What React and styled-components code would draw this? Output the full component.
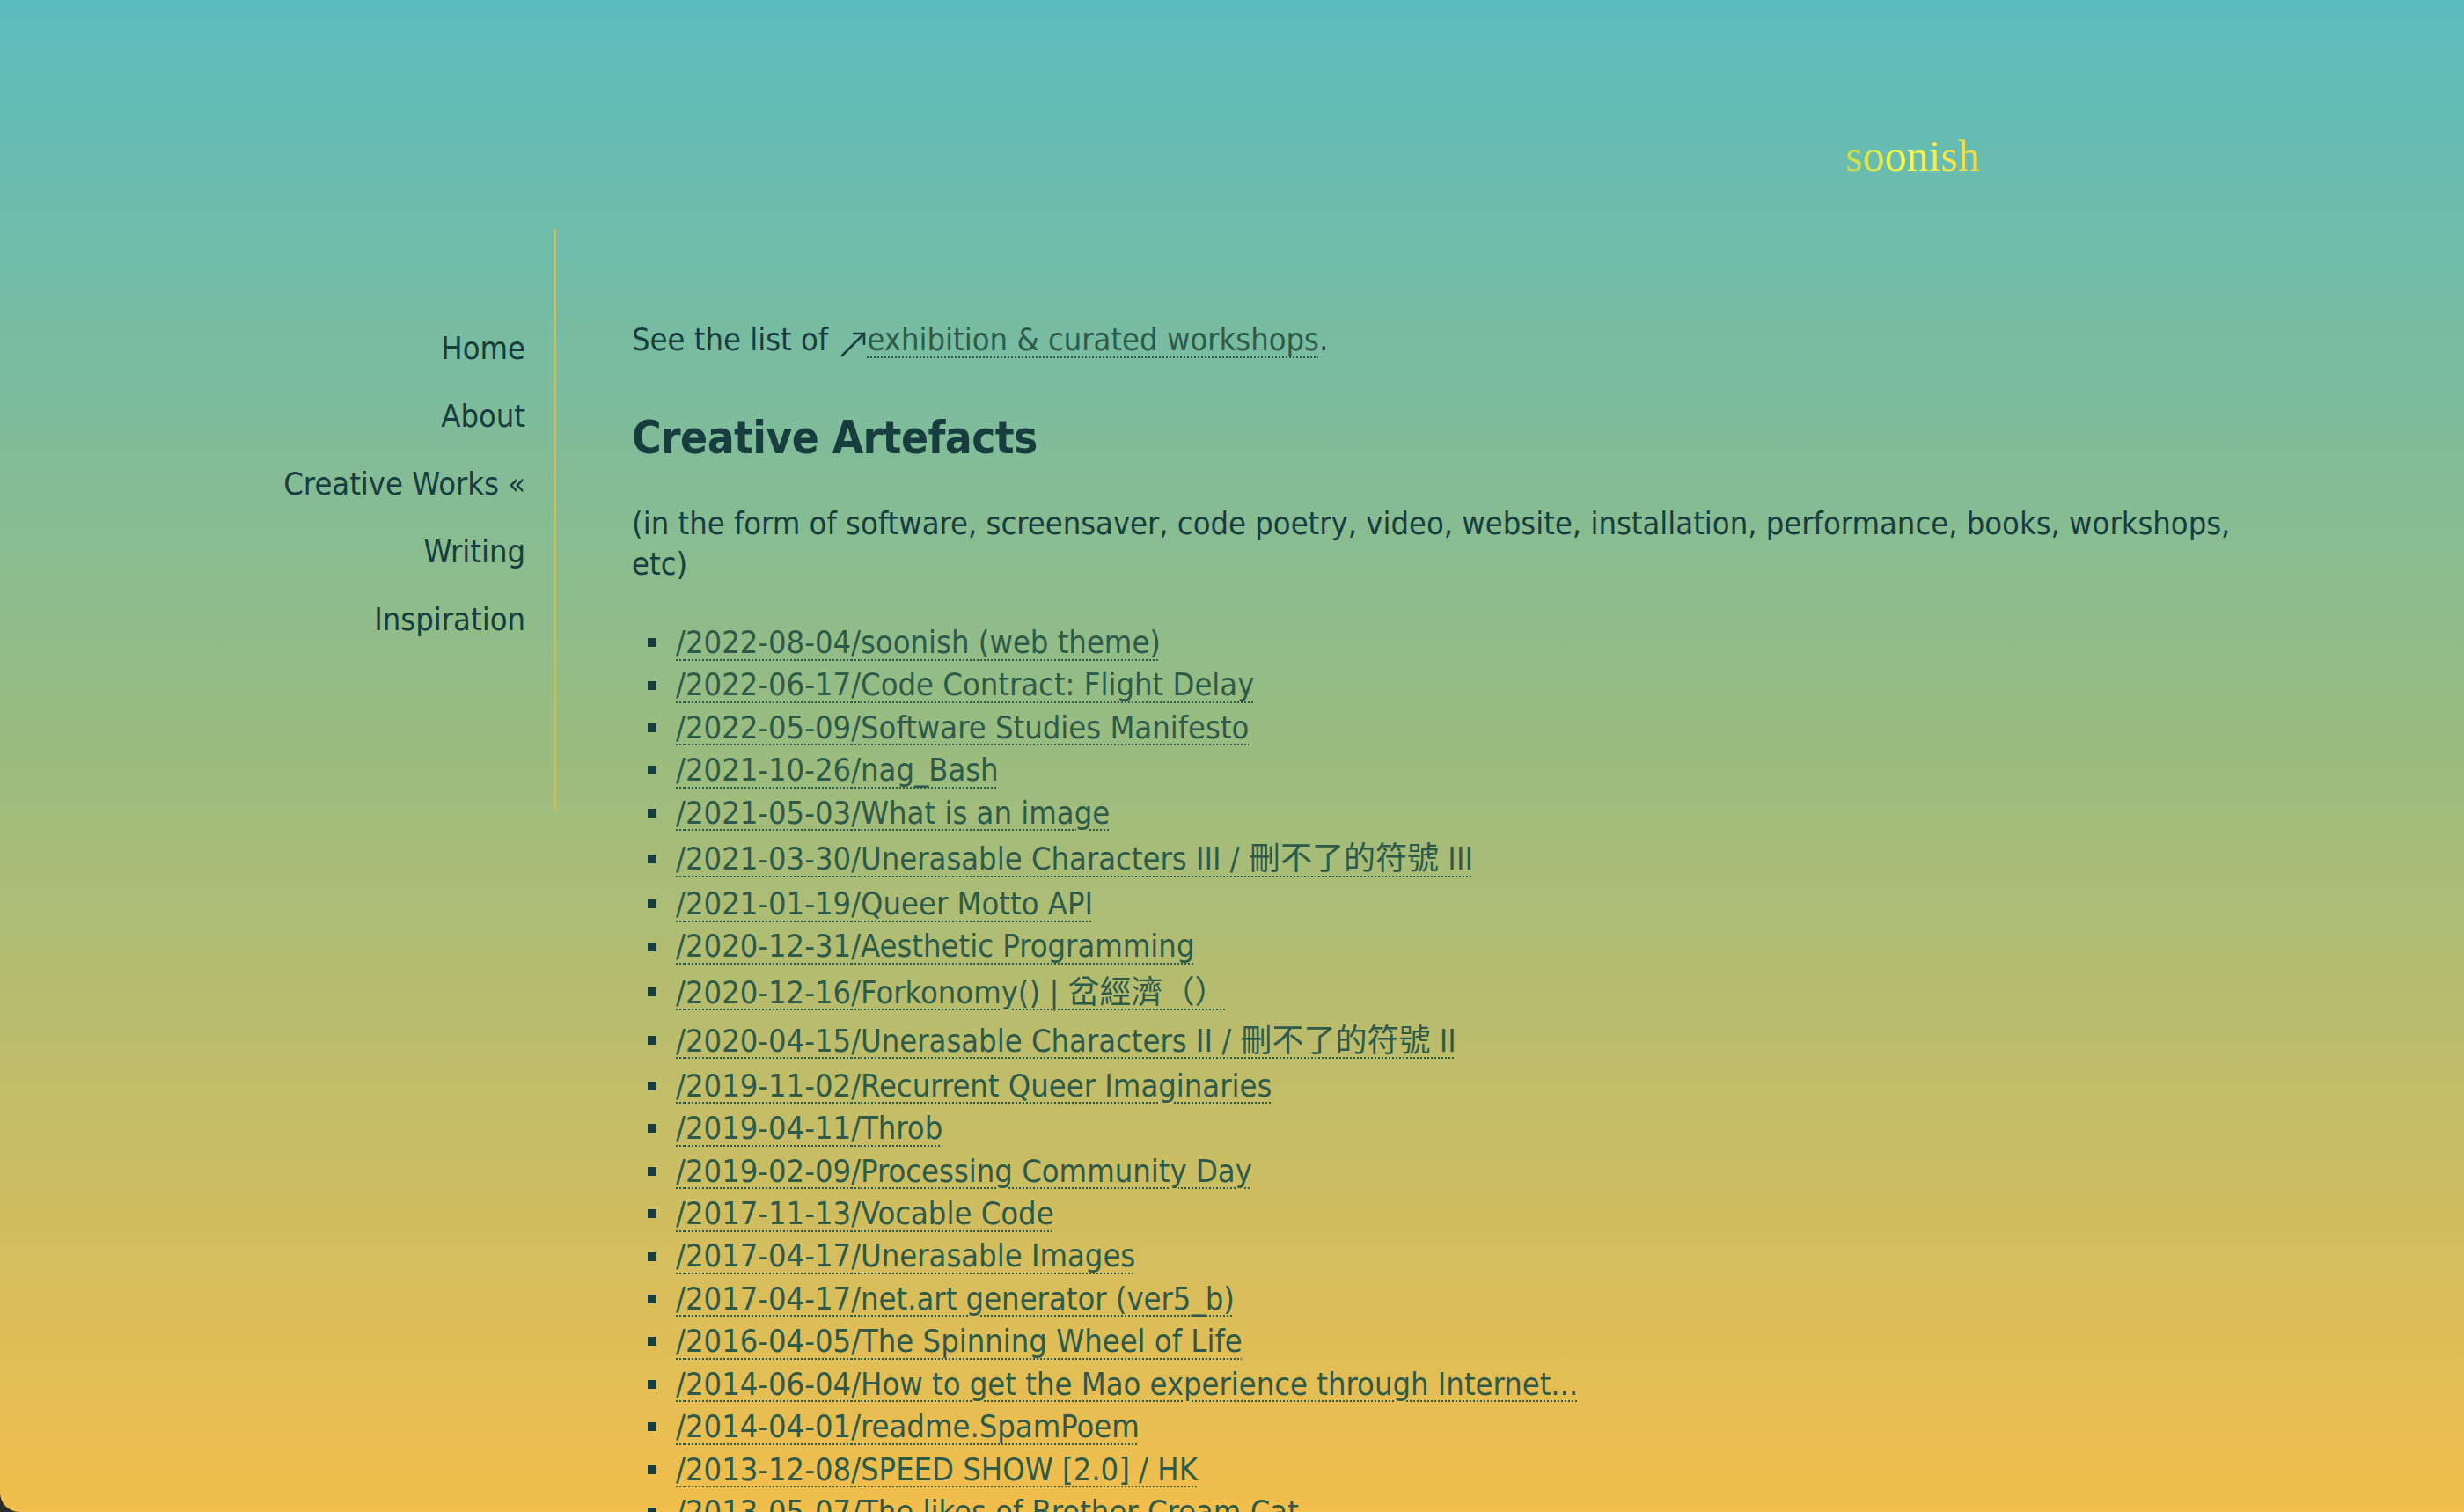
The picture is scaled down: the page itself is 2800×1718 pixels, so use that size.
import styled, { createGlobalStyle } from "styled-components";

const GlobalStyle = createGlobalStyle`
  html, body {
    margin: 0;
    padding: 0;
    background: #2b2b2b;
  }
  * {
    box-sizing: border-box;
  }
`;

const fontStack = `"Liberation Sans Narrow", "DejaVu Sans Condensed", "Noto Sans CJK TC", sans-serif`;

const Page = styled.div`
  width: 2800px;
  height: 1718px;
  overflow: hidden;
  background: linear-gradient(180deg, #5bbcbe 0%, #9bbc7f 50%, #f2be4c 100%);
  border-bottom-left-radius: 22px;
  font-family: ${fontStack};
  color: #173d3f;
`;

const Header = styled.header`
  height: 260px;
  display: flex;
  justify-content: flex-end;
  padding: 152px 550px 0 0;
`;

const Logo = styled.a`
  font-family: "Liberation Serif", "DejaVu Serif", serif;
  font-size: 50px;
  line-height: 1;
  height: 54px;
  background: linear-gradient(90deg, #c6db48 0%, #fbf84c 45%, #f4d646 100%);
  -webkit-background-clip: text;
  background-clip: text;
  color: transparent;
  text-decoration: none;
`;

const Body = styled.div`
  display: grid;
  grid-template-columns: 632px 1fr;
  align-items: start;
`;

const Sidebar = styled.nav`
  height: 660px;
  border-right: 3px solid #d4bb4f;
  padding: 97px 32px 0 0;
`;

const NavList = styled.ul`
  list-style: none;
  margin: 0;
  padding: 0;
  text-align: right;
`;

const NavItem = styled.li`
  font-size: 36px;
  line-height: 77px;
  a {
    color: #173d3f;
    text-decoration: none;
  }
`;

const Content = styled.main`
  padding: 103px 0 0 86px;
  width: 1940px;
`;

const Lead = styled.p`
  margin: 0;
  font-size: 36px;
  line-height: 46px;
`;

const Arrow = styled.svg`
  width: 32px;
  height: 32px;
  margin: 0 0 -8px 2px;
`;

const TextLink = styled.a`
  color: #2e5a4a;
  text-decoration: underline dotted;
  text-decoration-thickness: 2px;
  text-underline-offset: 7px;
`;

const Heading = styled.h2`
  margin: 54px 0 0;
  font-size: 51px;
  font-weight: 700;
  letter-spacing: -0.6px;
  line-height: 70px;
`;

const Note = styled.p`
  margin: 39px 0 0;
  font-size: 36px;
  line-height: 46px;
  max-width: 1820px;
`;

const WorkList = styled.ul`
  list-style: none;
  margin: 42px 0 0;
  padding: 0;
`;

const WorkItem = styled.li`
  display: flex;
  align-items: center;
  font-size: 36px;
  line-height: ${(p) => (p.$cjk ? "55px" : "48.4px")};
  white-space: nowrap;
`;

const Bullet = styled.span`
  flex: none;
  width: 10px;
  height: 10px;
  margin: 0 22px 0 18px;
  background: #173d3f;
`;

const works = [
  ["2022-08-04", "soonish (web theme)"],
  ["2022-06-17", "Code Contract: Flight Delay"],
  ["2022-05-09", "Software Studies Manifesto"],
  ["2021-10-26", "nag_Bash"],
  ["2021-05-03", "What is an image"],
  ["2021-03-30", "Unerasable Characters III / 刪不了的符號 III", true],
  ["2021-01-19", "Queer Motto API"],
  ["2020-12-31", "Aesthetic Programming"],
  ["2020-12-16", "Forkonomy() | 岔經濟（）", true],
  ["2020-04-15", "Unerasable Characters II / 刪不了的符號 II", true],
  ["2019-11-02", "Recurrent Queer Imaginaries"],
  ["2019-04-11", "Throb"],
  ["2019-02-09", "Processing Community Day"],
  ["2017-11-13", "Vocable Code"],
  ["2017-04-17", "Unerasable Images"],
  ["2017-04-17", "net.art generator (ver5_b)"],
  ["2016-04-05", "The Spinning Wheel of Life"],
  ["2014-06-04", "How to get the Mao experience through Internet..."],
  ["2014-04-01", "readme.SpamPoem"],
  ["2013-12-08", "SPEED SHOW [2.0] / HK"],
  ["2013-05-07", "The likes of Brother Cream Cat"],
];

const nav = ["Home", "About", "Creative Works «", "Writing", "Inspiration"];

export default function App() {
  return (
    <Page>
      <GlobalStyle />
      <Header>
        <Logo href="#">soonish</Logo>
      </Header>
      <Body>
        <Sidebar>
          <NavList>
            {nav.map((n) => (
              <NavItem key={n}>
                <a href="#">{n}</a>
              </NavItem>
            ))}
          </NavList>
        </Sidebar>
        <Content>
          <Lead>
            See the list of{" "}
            <Arrow viewBox="0 0 32 32" fill="none" stroke="#173d3f" strokeWidth="2.6" strokeLinecap="round">
              <path d="M3 30 L28 5" />
              <path d="M16 5 H28 V17" />
            </Arrow>
            <TextLink href="#">exhibition &amp; curated workshops</TextLink>.
          </Lead>
          <Heading>Creative Artefacts</Heading>
          <Note>
            (in the form of software, screensaver, code poetry, video, website,
            installation, performance, books, workshops, etc)
          </Note>
          <WorkList>
            {works.map(([date, title, cjk], i) => (
              <WorkItem key={i} $cjk={cjk}>
                <Bullet />
                <TextLink href="#">
                  /{date}/{title}
                </TextLink>
              </WorkItem>
            ))}
          </WorkList>
        </Content>
      </Body>
    </Page>
  );
}
